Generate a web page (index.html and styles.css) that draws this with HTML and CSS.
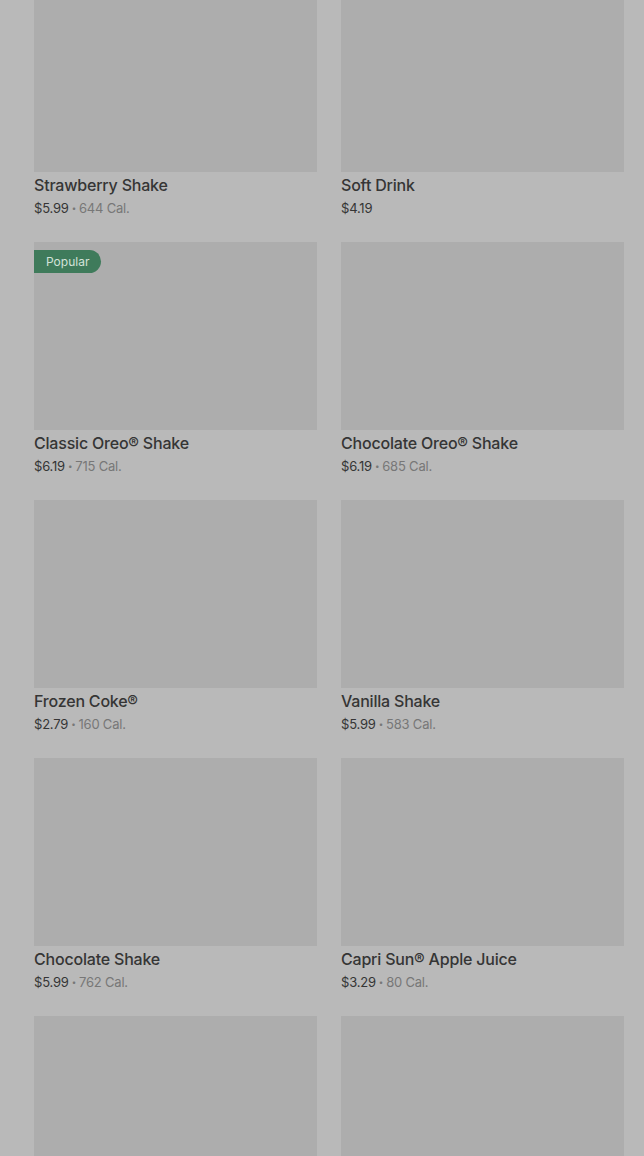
FILE: index.html
```html
<!DOCTYPE HTML>
<html lang="en">
<head>
    <meta charset="UTF-8">
    <meta name="viewport" content="width=device-width, initial-scale=1.0">
    <title>Menu</title>
    <link rel="stylesheet" href="styles.css">
</head>
<body>
    <div class="menu-grid">
        <div class="item">
            <div class="item-image"></div>
            <h3 class="item-title">Strawberry Shake</h3>
            <p class="item-meta">$5.99<span class="dot">•</span><span class="cal">644 Cal.</span></p>
        </div>
        <div class="item">
            <div class="item-image"></div>
            <h3 class="item-title">Soft Drink</h3>
            <p class="item-meta">$4.19</p>
        </div>
        <div class="item">
            <div class="item-image">
                <span class="badge">Popular</span>
            </div>
            <h3 class="item-title">Classic Oreo® Shake</h3>
            <p class="item-meta">$6.19<span class="dot">•</span><span class="cal">715 Cal.</span></p>
        </div>
        <div class="item">
            <div class="item-image"></div>
            <h3 class="item-title">Chocolate Oreo® Shake</h3>
            <p class="item-meta">$6.19<span class="dot">•</span><span class="cal">685 Cal.</span></p>
        </div>
        <div class="item">
            <div class="item-image"></div>
            <h3 class="item-title">Frozen Coke®</h3>
            <p class="item-meta">$2.79<span class="dot">•</span><span class="cal">160 Cal.</span></p>
        </div>
        <div class="item">
            <div class="item-image"></div>
            <h3 class="item-title">Vanilla Shake</h3>
            <p class="item-meta">$5.99<span class="dot">•</span><span class="cal">583 Cal.</span></p>
        </div>
        <div class="item">
            <div class="item-image"></div>
            <h3 class="item-title">Chocolate Shake</h3>
            <p class="item-meta">$5.99<span class="dot">•</span><span class="cal">762 Cal.</span></p>
        </div>
        <div class="item">
            <div class="item-image"></div>
            <h3 class="item-title">Capri Sun® Apple Juice</h3>
            <p class="item-meta">$3.29<span class="dot">•</span><span class="cal">80 Cal.</span></p>
        </div>
        <div class="item">
            <div class="item-image"></div>
        </div>
        <div class="item">
            <div class="item-image"></div>
        </div>
    </div>
</body>
</html>
```

FILE: styles.css
```css
/* Page, dimmed as if behind an overlay */
body {
    font-family: Inter, "Noto Sans", Arial, sans-serif;
    background-color: #b9b9b9;
    color: #333;
    margin: 0;
    padding: 0;
    overflow: hidden;
}

/* Two column menu grid */
.menu-grid {
    display: grid;
    grid-template-columns: 283px 283px;
    column-gap: 24px;
    row-gap: 24px;
    padding: 0 20px 0 34px;
    margin-top: -16px;
}

.item {
    display: flex;
    flex-direction: column;
}

.item-image {
    position: relative;
    height: 188px;
    background-color: #adadad;
}

/* Badge sits over the picture */
.badge {
    position: absolute;
    top: 8px;
    left: 0;
    height: 23px;
    line-height: 23px;
    padding: 0 12px;
    background-color: #3f7b5b;
    color: #d3e2d9;
    font-size: 12px;
    border-radius: 0 12px 12px 0;
}

.item-title {
    margin: 1px 0 0;
    font-size: 16px;
    font-weight: 500;
    letter-spacing: -0.2px;
    line-height: 24px;
    color: #353535;
}

.item-meta {
    margin: 1px 0 0;
    height: 20px;
    font-size: 13px;
    letter-spacing: -0.2px;
    line-height: 20px;
    color: #353535;
}

.dot {
    display: inline-block;
    margin: 0 3px;
    font-size: 8px;
    line-height: 20px;
    vertical-align: top;
    color: #777;
}

.cal {
    color: #777;
}
```
